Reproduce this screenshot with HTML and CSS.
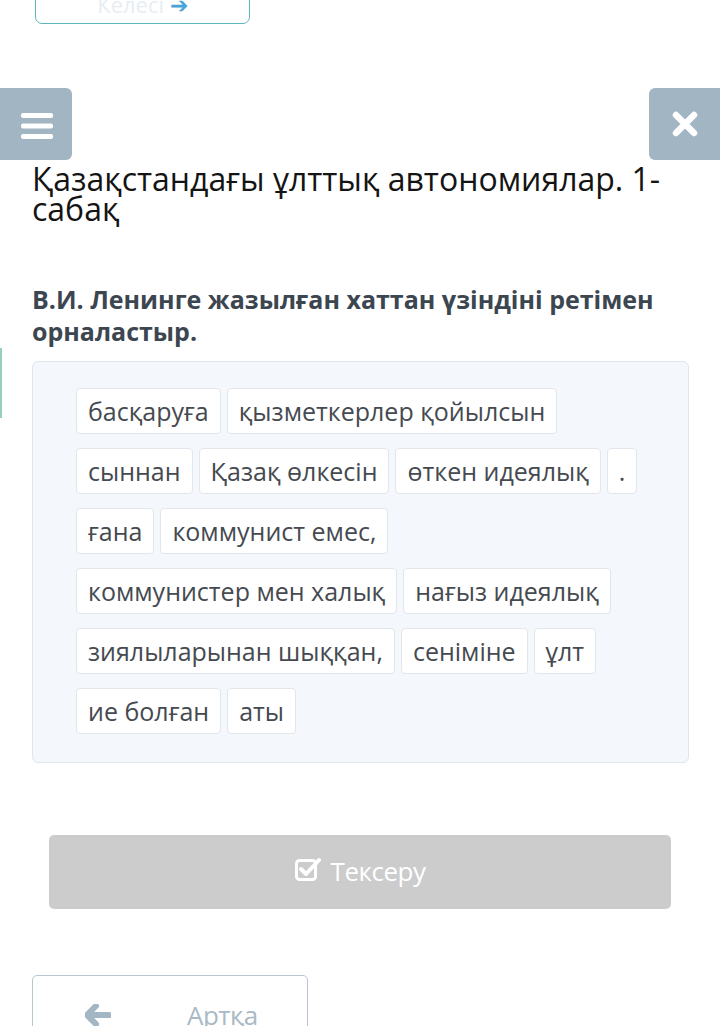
FILE: index.html
```html
<!DOCTYPE html>
<html lang="kk">
<head>
<meta charset="utf-8">
<title>Қазақстандағы ұлттық автономиялар</title>
<link rel="stylesheet" href="styles.css">
</head>
<body>
<div class="page">
  <div class="top-clip">
    <div class="top-btn"><span class="top-btn-text">Келесі <span class="top-arrow">➔</span></span></div>
  </div>

  <div class="nav-row">
    <button class="nav-btn menu" aria-label="menu">
      <svg width="34" height="28" viewBox="0 0 34 28"><rect x="1" y="1" width="32" height="5" rx="2" fill="#fff"/><rect x="1" y="11.5" width="32" height="5" rx="2" fill="#fff"/><rect x="1" y="22" width="32" height="5" rx="2" fill="#fff"/></svg>
    </button>
    <button class="nav-btn close" aria-label="close">
      <svg width="28" height="28" viewBox="0 0 28 28"><path d="M5 5 L23 23 M23 5 L5 23" stroke="#fff" stroke-width="6.5" stroke-linecap="round"/></svg>
    </button>
  </div>

  <h1 class="title">Қазақстандағы ұлттық автономиялар. 1-сабақ</h1>

  <h2 class="question">В.И. Ленинге жазылған хаттан үзіндіні ретімен орналастыр.</h2>

  <div class="side-mark"></div>

  <div class="board">
    <span class="token">басқаруға</span>
    <span class="token">қызметкерлер қойылсын</span>
    <span class="token">сыннан</span>
    <span class="token">Қазақ өлкесін</span>
    <span class="token">өткен идеялық</span>
    <span class="token">.</span>
    <span class="token">ғана</span>
    <span class="token">коммунист емес,</span>
    <span class="token">коммунистер мен халық</span>
    <span class="token">нағыз идеялық</span>
    <span class="token">зиялыларынан шыққан,</span>
    <span class="token">сеніміне</span>
    <span class="token">ұлт</span>
    <span class="token">ие болған</span>
    <span class="token">аты</span>
  </div>

  <button class="check-btn">
    <svg width="26" height="24" viewBox="0 0 26 24"><rect x="1.5" y="3.5" width="19" height="19" rx="3" fill="none" stroke="#fff" stroke-width="3"/><path d="M6 12 L11 17 L24 3" fill="none" stroke="#fff" stroke-width="4" stroke-linecap="round" stroke-linejoin="round"/></svg>
    <span>Тексеру</span>
  </button>

  <button class="back-btn">
    <svg width="26" height="22" viewBox="0 0 26 22"><path d="M11 2 L2 11 L11 20 M3 11 L24 11" fill="none" stroke="#a3b6c3" stroke-width="6" stroke-linecap="round" stroke-linejoin="round"/></svg>
    <span>Артқа</span>
  </button>
</div>
</body>
</html>
```

FILE: styles.css
```css
* { box-sizing: border-box; }
html, body { margin: 0; padding: 0; background: #fff; }
body { font-family: "Open Sans", "Noto Sans", sans-serif; overflow: hidden; }
.page { position: relative; width: 720px; height: 1026px; overflow: hidden; }

.top-clip { height: 24px; overflow: hidden; padding-left: 35px; display: flex; align-items: flex-end; }
.top-btn {
  width: 215px; height: 50px; border: 1.5px solid #5db5be; border-radius: 7px;
  display: flex; justify-content: center; align-items: flex-end; padding-bottom: 8px;
}
.top-btn-text { color: #e6eef3; font-size: 22px; line-height: 22px; }
.top-arrow { color: #4aa3d8; }

.nav-row { margin-top: 64px; display: flex; justify-content: space-between; }
.nav-btn {
  width: 72px; height: 72px; border: 0; background: #a2b5c3; border-radius: 6px;
  display: flex; align-items: center; justify-content: center; padding: 0;
}
.nav-btn.menu { border-radius: 0 6px 6px 0; width: 72px; }
.nav-btn.menu svg { margin-left: 1px; margin-top: 3px; }
.nav-btn.close { border-radius: 6px 0 0 6px; width: 71px; }

.title {
  margin: 4px 0 0 32px; width: 640px; font-weight: 400; font-size: 32px; line-height: 30px; color: #141414;
}
.question {
  margin: 59px 32px 0 32px; font-weight: 700; font-size: 25px; line-height: 32px; color: #3c4650;
}
.side-mark { position: absolute; left: 0; top: 348px; width: 2px; height: 70px; background: #93d1bb; }

.board {
  margin: 14px 31px 0 32px; background: #f4f8fc; border: 1px solid #dfe5ea; border-radius: 6px;
  padding: 26px 44px 27px 43px; display: flex; flex-wrap: wrap; gap: 14px 6px; min-height: 402px;
  align-content: flex-start;
}
.token {
  background: #fff; border: 1px solid #e2e6ea; border-radius: 4px; padding: 6px 11px;
  font-size: 25px; line-height: 32px; color: #454a50;
}

.check-btn {
  margin: 72px 49px 0 49px; width: 622px; height: 74px; border: 0; border-radius: 5px; background: #cccccc;
  display: flex; align-items: center; justify-content: center; gap: 10px; padding: 0 0 3px 0;
  font-family: "Open Sans", sans-serif; font-size: 26px; color: #fff; font-weight: 400; letter-spacing: -0.5px;
}
.check-btn svg { margin-top: -4px; }
.back-btn {
  margin: 66px 0 0 32px; width: 276px; height: 74px; border: 1px solid #b9c6cf; border-radius: 5px; background: #fff;
  display: flex; align-items: center; padding: 6px 0 0 52px; gap: 76px;
  font-family: "Open Sans", sans-serif; font-size: 26px; color: #a9b9c5; letter-spacing: -0.5px;
}
```
